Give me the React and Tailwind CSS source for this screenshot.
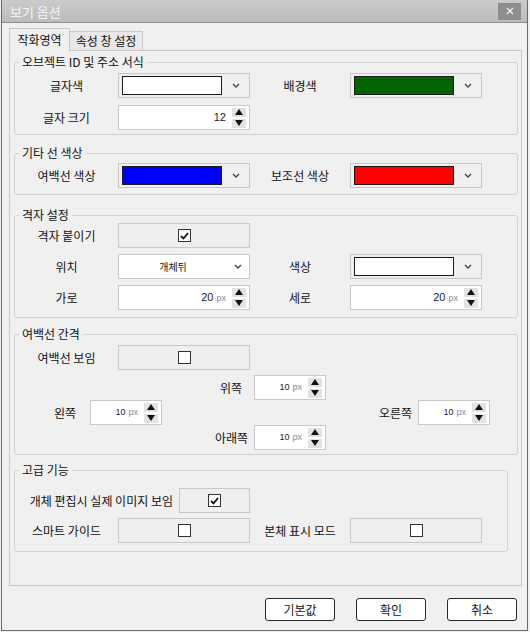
import React from 'react';

const Chevron = () => (
    <svg width="8" height="5" viewBox="0 0 8 5">
        <path d="M1 1l3 3 3-3" fill="none" stroke="#444" strokeWidth="1.4" />
    </svg>
);

const Arrows = () => (
    <div className="flex flex-col gap-[2px] ml-[6px] mr-[3px]">
        <div className="w-[14px] h-[9px] bg-[#e2e2e2] flex items-center justify-center">
            <svg width="8" height="6" viewBox="0 0 8 6"><path d="M4 0L8 6H0z" fill="#111" /></svg>
        </div>
        <div className="w-[14px] h-[9px] bg-[#e2e2e2] flex items-center justify-center">
            <svg width="8" height="6" viewBox="0 0 8 6"><path d="M0 0h8L4 6z" fill="#111" /></svg>
        </div>
    </div>
);

const Spin = ({ value, unit, w = 'w-[132px]', size = 'text-[11px]' }) => (
    <div className={`flex items-center h-[25px] border border-[#c8c8c8] bg-white ${w}`}>
        <span className={`flex-1 text-right font-['Liberation_Sans',sans-serif] leading-none text-[#1a1a2a] ${size}`}>
            {value}
            {unit && <span className="ml-[3px] text-[9px] text-[#8a8a9a]">{unit}</span>}
        </span>
        <Arrows />
    </div>
);

const ColorPick = ({ color }) => (
    <div className="h-[25px] w-[132px] border border-[#c8c8c8] bg-[#f0f0f0] flex items-center pl-[3px]">
        <div className={`w-[100px] h-[19px] border border-[#1a1a1a] ${color}`} />
        <div className="flex-1 flex justify-center">
            <Chevron />
        </div>
    </div>
);

const Select = ({ value }) => (
    <div className="h-[25px] w-[132px] border border-[#c8c8c8] bg-white flex items-center">
        <span className="flex-1 text-center text-[10px] leading-none">{value}</span>
        <div className="w-[22px] flex justify-center">
            <Chevron />
        </div>
    </div>
);

const Box = ({ checked }) => (
    <div className="w-[13px] h-[13px] border border-[#333] bg-white flex items-center justify-center">
        {checked && (
            <svg width="9" height="8" viewBox="0 0 9 8">
                <path d="M1 4l2.5 2.5L8 1" fill="none" stroke="#111" strokeWidth="1.8" />
            </svg>
        )}
    </div>
);

const CheckField = ({ checked, w = 'w-[132px]' }) => (
    <div className={`h-[25px] ${w} border border-[#c8c8c8] bg-[#efefef] flex items-center justify-center`}>
        <Box checked={checked} />
    </div>
);

const Label = ({ children }) => (
    <div className="text-center text-[12px] leading-[16px]">{children}</div>
);

const Group = ({ title, className, children }) => (
    <fieldset className={`border border-[#d2d2d2] rounded-[3px] ${className}`}>
        <legend className="ml-[4px] px-[3px] text-[12px] leading-[16px]">{title}</legend>
        {children}
    </fieldset>
);

const SmallSpin = () => <Spin value="10" unit="px" w="w-[72px]" size="text-[9px]" />;

export default function App() {
    return (
        <div className="w-[530px] h-[632px] bg-[#f0f0f0] font-['Noto_Sans_CJK_KR','Noto_Sans',sans-serif] text-[#111]">
            <div className="ml-[1px] w-[527px] h-[631px] border-x border-b border-[#6a6a6a] flex flex-col">
                {/* 타이틀 바 */}
                <div className="h-[23px] border-b border-[#8f8f8f] bg-gradient-to-b from-[#cbcbcb] to-[#bcbcbc] flex items-center justify-between">
                    <span className="pl-[8px] text-[13px] leading-none text-[#f4f4f4]">보기 옵션</span>
                    <div className="mr-[6px] w-[23px] h-[17px] bg-[#8e8e8e] flex items-center justify-center">
                        <svg width="8" height="8" viewBox="0 0 8 8">
                            <path d="M1 1l6 6M7 1L1 7" stroke="#f0f0f0" strokeWidth="1.4" />
                        </svg>
                    </div>
                </div>

                <div className="pl-[7px] pr-[5px] mt-[5px]">
                    {/* 탭 */}
                    <div className="relative z-10 -mb-px flex items-end h-[23px]">
                        <div className="h-[23px] w-[61px] border border-b-0 border-[#c9c9c9] bg-[#f0f0f0] flex items-center justify-center text-[12px]">
                            작화영역
                        </div>
                        <div className="h-[20px] w-[73px] border border-l-0 border-[#c9c9c9] bg-[#e8e8e8] flex items-center justify-center text-[12px]">
                            속성 창 설정
                        </div>
                    </div>

                    {/* 탭 패널 */}
                    <div className="h-[536px] border border-[#c9c9c9] bg-[#f0f0f0] pl-[4px] pt-[3px]">
                        <Group title="오브젝트 ID 및 주소 서식" className="w-[504px] pt-[3px] pb-[4px]">
                            <div className="grid grid-cols-[103px_132px_100px_132px] gap-y-[7px] items-center">
                                <Label>글자색</Label>
                                <ColorPick color="bg-white" />
                                <Label>배경색</Label>
                                <ColorPick color="bg-[#006400]" />
                                <Label>글자 크기</Label>
                                <Spin value="12" />
                            </div>
                        </Group>

                        <Group title="기타 선 색상" className="w-[504px] mt-[10px] pt-[2px] pb-[6px]">
                            <div className="grid grid-cols-[103px_132px_100px_132px] items-center">
                                <Label>여백선 색상</Label>
                                <ColorPick color="bg-[#0000ff]" />
                                <Label>보조선 색상</Label>
                                <ColorPick color="bg-[#ff0000]" />
                            </div>
                        </Group>

                        <Group title="격자 설정" className="w-[504px] mt-[12px] pb-[7px]">
                            <div className="grid grid-cols-[103px_132px_100px_132px] gap-y-[6px] items-center">
                                <Label>격자 붙이기</Label>
                                <CheckField checked />
                                <div />
                                <div />
                                <Label>위치</Label>
                                <Select value="개체뒤" />
                                <Label>색상</Label>
                                <ColorPick color="bg-white" />
                                <Label>가로</Label>
                                <Spin value="20" unit="px" />
                                <Label>세로</Label>
                                <Spin value="20" unit="px" />
                            </div>
                        </Group>

                        <Group title="여백선 간격" className="w-[504px] mt-[8px] pt-[3px] pb-[4px]">
                            <div className="grid grid-cols-[103px_132px] items-center">
                                <Label>여백선 보임</Label>
                                <CheckField />
                            </div>
                            <div className="mt-[5px] flex flex-col text-[12px] leading-[16px]">
                                <div className="flex h-[25px]">
                                    <div className="w-[147px]" />
                                    <div className="w-[164px] flex items-center justify-end">
                                        <span className="mr-[12px]">위쪽</span>
                                        <SmallSpin />
                                    </div>
                                </div>
                                <div className="flex h-[25px]">
                                    <div className="w-[147px] flex items-center justify-end">
                                        <span className="mr-[14px]">왼쪽</span>
                                        <SmallSpin />
                                    </div>
                                    <div className="w-[164px]" />
                                    <div className="w-[164px] flex items-center justify-end">
                                        <span className="mr-[6px]">오른쪽</span>
                                        <SmallSpin />
                                    </div>
                                </div>
                                <div className="flex h-[25px]">
                                    <div className="w-[147px]" />
                                    <div className="w-[164px] flex items-center justify-end">
                                        <span className="mr-[6px]">아래쪽</span>
                                        <SmallSpin />
                                    </div>
                                </div>
                            </div>
                        </Group>

                        <Group title="고급 기능" className="w-[494px] mt-[7px] pt-[10px] pb-[8px]">
                            <div className="grid grid-cols-[103px_132px_100px_132px] gap-y-[5px] items-center">
                                <div className="col-span-2 flex items-center justify-end gap-[6px]">
                                    <span className="text-[12px] leading-[16px]">개체 편집시 실제 이미지 보임</span>
                                    <CheckField checked w="w-[71px]" />
                                </div>
                                <div />
                                <div />
                                <Label>스마트 가이드</Label>
                                <CheckField />
                                <Label>본체 표시 모드</Label>
                                <CheckField />
                            </div>
                        </Group>
                    </div>
                </div>

                {/* 하단 버튼 */}
                <div className="mt-[12px] pr-[10px] flex justify-end gap-[21px]">
                    {['기본값', '확인', '취소'].map((t) => (
                        <button
                            key={t}
                            className="w-[70px] h-[23px] rounded-[3px] border border-[#2a2a2a] bg-white text-[12px] leading-none"
                        >
                            {t}
                        </button>
                    ))}
                </div>
            </div>
        </div>
    );
}
